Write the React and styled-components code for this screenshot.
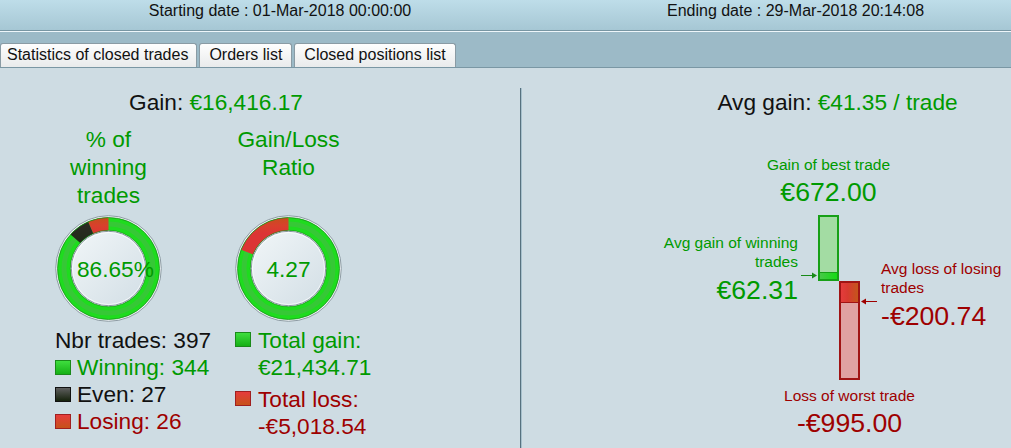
import React from 'react';
import styled, { createGlobalStyle } from 'styled-components';

const GREEN = '#009a00';
const RED = '#9e0000';

const GlobalStyle = createGlobalStyle`
  html, body { margin: 0; padding: 0; }
  body {
    width: 1011px;
    height: 448px;
    overflow: hidden;
    background: #cedce3;
    font-family: "Liberation Sans", Arial, sans-serif;
    color: #111;
  }
`;

const TopBar = styled.div`
  box-sizing: border-box;
  height: 31px;
  padding: 2px 0 0 55px;
  display: grid;
  grid-template-columns: 450px 1fr;
  background: linear-gradient(#bedde9, #a6c7d4);
  border-bottom: 1px solid #7896a3;
  font-size: 16px;
  line-height: 18px;
`;

const DateCell = styled.div`
  text-align: center;
  padding-left: ${p => p.$shift || 0}px;
`;

const TabStrip = styled.div`
  box-sizing: border-box;
  height: 37px;
  border-top: 1px solid #eef6fa;
  border-bottom: 1px solid #7a97a4;
  background: #9cbac7;
  display: flex;
  align-items: flex-end;
  gap: 2px;
`;

const Tab = styled.div`
  box-sizing: border-box;
  height: 24px;
  padding: ${p => (p.$first ? '0 8px 0 6px' : '0 9px')};
  border: 1px solid #8a9ba4;
  border-bottom: none;
  border-radius: 3px 3px 0 0;
  background: linear-gradient(#fefefe, #e9ebec);
  font-size: 16px;
  line-height: 22px;
  white-space: nowrap;
`;

const Main = styled.div`
  display: flex;
  height: 380px;
`;

const LeftPanel = styled.div`
  box-sizing: border-box;
  width: 520px;
  padding: 20px 0 0 55px;
  font-size: 22.67px;
  line-height: 28px;
`;

const Divider = styled.div`
  width: 1px;
  margin-top: 20px;
  background: #56717f;
  box-shadow: 1px 0 0 #a6c0cc;
`;

const RightPanel = styled.div`
  flex: 1;
  padding-top: 20px;
  font-size: 22.67px;
  line-height: 28px;
`;

const Title = styled.div`
  width: ${p => p.$width || 'auto'};
  padding-left: ${p => p.$pad || 0}px;
  text-align: center;
  white-space: nowrap;
`;

const Value = styled.span`
  color: ${p => p.$color || GREEN};
`;

const Stats = styled.div`
  display: grid;
  grid-template-columns: 107px 107px;
  column-gap: 73px;
  margin-top: 9px;
`;

const Heading = styled.div`
  color: ${GREEN};
  text-align: center;
`;

const DonutBox = styled.div`
  display: grid;
  width: 107px;
  height: 107px;
  margin-top: 6px;
  & > * { grid-area: 1 / 1; }
`;

const DonutLabel = styled.div`
  align-self: center;
  justify-self: center;
  width: 63px;
  text-align: center;
  white-space: nowrap;
  color: ${GREEN};
`;

const Legend = styled.div`
  margin-top: 5px;
  line-height: 27px;
  white-space: nowrap;
`;

const LegendRow = styled.div`
  display: flex;
  align-items: ${p => (p.$top ? 'flex-start' : 'center')};
  gap: ${p => (p.$top ? 7 : 6)}px;
  margin-top: ${p => p.$gap || 0}px;
  color: ${p => p.$color || '#111'};
`;

const Swatch = styled.span`
  flex: none;
  box-sizing: border-box;
  width: 16px;
  height: 15px;
  margin-top: ${p => p.$offset || 0}px;
  border: 1px solid ${p => p.$border};
  background: linear-gradient(${p => p.$from}, ${p => p.$to});
`;

const Chart = styled.div`
  display: grid;
  grid-template-columns: 150px 20px 21px 21px 21px 130px;
  grid-template-rows: auto 66px 99px auto;
  margin: 39px 0 0 127px;
`;

const SmallText = styled.div`
  font-size: 15.5px;
  line-height: 19px;
`;

const BigText = styled.div`
  font-size: 26.67px;
  line-height: 32px;
  margin-top: ${p => p.$gap || 0}px;
  white-space: nowrap;
`;

const BestBlock = styled.div`
  grid-column: 3;
  grid-row: 1;
  justify-self: center;
  padding-bottom: 7px;
  text-align: center;
  white-space: nowrap;
  color: ${GREEN};
`;

const WorstBlock = styled.div`
  grid-column: 4;
  grid-row: 4;
  justify-self: center;
  margin-top: 6px;
  text-align: center;
  white-space: nowrap;
  color: ${RED};
`;

const WinBlock = styled.div`
  grid-column: 1;
  grid-row: 2 / 4;
  align-self: start;
  margin-top: 18px;
  text-align: right;
  color: ${GREEN};
`;

const LossBlock = styled.div`
  grid-column: 6;
  grid-row: 2 / 4;
  align-self: start;
  margin-top: 44px;
  color: ${RED};
`;

const GainBar = styled.div`
  grid-column: 3;
  grid-row: 2;
  box-sizing: border-box;
  display: flex;
  flex-direction: column;
  justify-content: flex-end;
  border: 2px solid #17a017;
  background: #a3dca3;
`;

const GainPart = styled.div`
  border-top: 1px solid #17a017;
  background: linear-gradient(90deg, #48c848, #14dc14);
`;

const LossBar = styled.div`
  grid-column: 4;
  grid-row: 3;
  box-sizing: border-box;
  display: flex;
  flex-direction: column;
  border: 2px solid #a01414;
  background: #e0a2a2;
`;

const LossPart = styled.div`
  border-bottom: 1px solid #a01414;
  background: linear-gradient(90deg, #e43c3c 0%, #d83a30 40%, #c4561c 100%);
`;

const ArrowCell = styled.div`
  grid-column: ${p => p.$col};
  grid-row: ${p => p.$row};
  align-self: ${p => (p.$up ? 'end' : 'start')};
  justify-self: ${p => (p.$up ? 'end' : 'start')};
  margin: ${p => (p.$up ? '0 1px 2px 0' : '17px 0 0 1px')};
  display: flex;
`;

const C = 53.5;

const arc = (from, to, r) => {
  const pt = f => {
    const a = 2 * Math.PI * f;
    return `${(C - r * Math.sin(a)).toFixed(2)} ${(C - r * Math.cos(a)).toFixed(2)}`;
  };
  const large = to - from > 0.5 ? 1 : 0;
  return `M ${pt(from)} A ${r} ${r} 0 ${large} 0 ${pt(to)}`;
};

const Donut = ({ id, segments, label }) => (
  <DonutBox>
    <svg width="107" height="107" viewBox="0 0 107 107">
      <defs>
        <linearGradient id={`${id}-disc`} x1="0" y1="0" x2="1" y2="1">
          <stop offset="0" stopColor="#f1f6f8" />
          <stop offset="1" stopColor="#d2dee5" />
        </linearGradient>
        <linearGradient id={`${id}-red`} gradientUnits="userSpaceOnUse" x1="0" y1="2" x2="0" y2="30">
          <stop offset="0" stopColor="#c4501a" />
          <stop offset="0.3" stopColor="#d8402c" />
          <stop offset="0.6" stopColor="#dc3434" />
          <stop offset="1" stopColor="#dc3434" />
        </linearGradient>
        <linearGradient id={`${id}-black`} gradientUnits="userSpaceOnUse" x1="0" y1="10" x2="0" y2="40">
          <stop offset="0" stopColor="#2a2a22" />
          <stop offset="1" stopColor="#1a2a12" />
        </linearGradient>
      </defs>
      <circle cx={C} cy={C} r="52.8" fill="#f0f4f6" stroke="#8e9ca4" strokeWidth="1" />
      <circle cx={C} cy={C} r="44.5" fill="none" stroke="#1edc1e" strokeWidth="13" />
      <circle cx={C} cy={C} r="44.5" fill="none" stroke="rgba(90,170,90,0.4)" strokeWidth="5" />
      {segments.map((s, i) => (
        <path
          key={i}
          d={arc(s.from, s.to, 44.5)}
          fill="none"
          stroke={s.kind === 'red' ? `url(#${id}-red)` : `url(#${id}-black)`}
          strokeWidth="13"
        />
      ))}
      <circle cx={C} cy={C} r="51" fill="none" stroke="rgba(20,140,20,0.7)" strokeWidth="1" />
      <circle cx={C} cy={C} r="38.2" fill="none" stroke="rgba(20,140,20,0.6)" strokeWidth="1" />
      <circle cx={C} cy={C} r="37.2" fill={`url(#${id}-disc)`} stroke="#8a98a0" strokeWidth="1" />
      <circle cx={C} cy={C} r="36" fill="none" stroke="#ffffff" strokeOpacity="0.7" strokeWidth="1" />
    </svg>
    <DonutLabel>{label}</DonutLabel>
  </DonutBox>
);

const Arrow = ({ color, left }) => (
  <svg width="16" height="7" viewBox="0 0 16 7">
    {left ? (
      <>
        <path d="M4 3.5 H16" stroke={color} strokeWidth="1" />
        <polygon points="0,3.5 5,0.5 5,6.5" fill={color} />
      </>
    ) : (
      <>
        <path d="M0 3.5 H12" stroke={color} strokeWidth="1" />
        <polygon points="16,3.5 11,0.5 11,6.5" fill={color} />
      </>
    )}
  </svg>
);

const stats = { trades: 397, winning: 344, even: 27, losing: 26 };
const best = 672, worst = 995, avgWin = 62.31, avgLoss = 200.74;

const App = () => {
  const redEnd = stats.losing / stats.trades;
  const blackEnd = (stats.losing + stats.even) / stats.trades;
  const lossShare = 5018.54 / (21434.71 + 5018.54);
  const winPart = Math.round((avgWin / best) * 62);
  const lossPart = Math.round((avgLoss / worst) * 95);

  return (
    <>
      <GlobalStyle />
      <TopBar>
        <DateCell>Starting date : 01-Mar-2018 00:00:00</DateCell>
        <DateCell $shift={75}>Ending date : 29-Mar-2018 20:14:08</DateCell>
      </TopBar>
      <TabStrip>
        <Tab $first>Statistics of closed trades</Tab>
        <Tab>Orders list</Tab>
        <Tab>Closed positions list</Tab>
      </TabStrip>
      <Main>
        <LeftPanel>
          <Title $width="322px">Gain: <Value>€16,416.17</Value></Title>
          <Stats>
            <Heading>% of winning trades</Heading>
            <Heading>Gain/Loss Ratio</Heading>
            <Donut
              id="win"
              label="86.65%"
              segments={[
                { from: 0, to: redEnd, kind: 'red' },
                { from: redEnd, to: blackEnd, kind: 'black' },
              ]}
            />
            <Donut id="ratio" label="4.27" segments={[{ from: 0, to: lossShare, kind: 'red' }]} />
            <Legend>
              <LegendRow>Nbr trades: 397</LegendRow>
              <LegendRow $color={GREEN}>
                <Swatch $from="#3ede3e" $to="#16b016" $border="#1a8a1a" />
                Winning: 344
              </LegendRow>
              <LegendRow>
                <Swatch $from="#5e5e5e" $to="#15220c" $border="#111" />
                Even: 27
              </LegendRow>
              <LegendRow $color={RED}>
                <Swatch $from="#e63c3c" $to="#c6521a" $border="#a02020" />
                Losing: 26
              </LegendRow>
            </Legend>
            <Legend>
              <LegendRow $top $color={GREEN}>
                <Swatch $offset={5} $from="#3ede3e" $to="#16b016" $border="#1a8a1a" />
                <div>Total gain:<br />€21,434.71</div>
              </LegendRow>
              <LegendRow $top $gap={5} $color={RED}>
                <Swatch $offset={5} $from="#e63c3c" $to="#c6521a" $border="#a02020" />
                <div>Total loss:<br />-€5,018.54</div>
              </LegendRow>
            </Legend>
          </Stats>
        </LeftPanel>
        <Divider />
        <RightPanel>
          <Title $pad={143}>Avg gain: <Value>€41.35 / trade</Value></Title>
          <Chart>
            <BestBlock>
              <SmallText>Gain of best trade</SmallText>
              <BigText $gap={2}>€672.00</BigText>
            </BestBlock>
            <WinBlock>
              <SmallText>Avg gain of winning trades</SmallText>
              <BigText $gap={3}>€62.31</BigText>
            </WinBlock>
            <ArrowCell $col={2} $row={2} $up>
              <Arrow color="#188a18" />
            </ArrowCell>
            <GainBar>
              <GainPart style={{ height: winPart }} />
            </GainBar>
            <LossBar>
              <LossPart style={{ height: lossPart }} />
            </LossBar>
            <ArrowCell $col={5} $row={3}>
              <Arrow color="#9e0000" left />
            </ArrowCell>
            <LossBlock>
              <SmallText>Avg loss of losing trades</SmallText>
              <BigText $gap={3}>-€200.74</BigText>
            </LossBlock>
            <WorstBlock>
              <SmallText>Loss of worst trade</SmallText>
              <BigText $gap={2}>-€995.00</BigText>
            </WorstBlock>
          </Chart>
        </RightPanel>
      </Main>
    </>
  );
};

export default App;
